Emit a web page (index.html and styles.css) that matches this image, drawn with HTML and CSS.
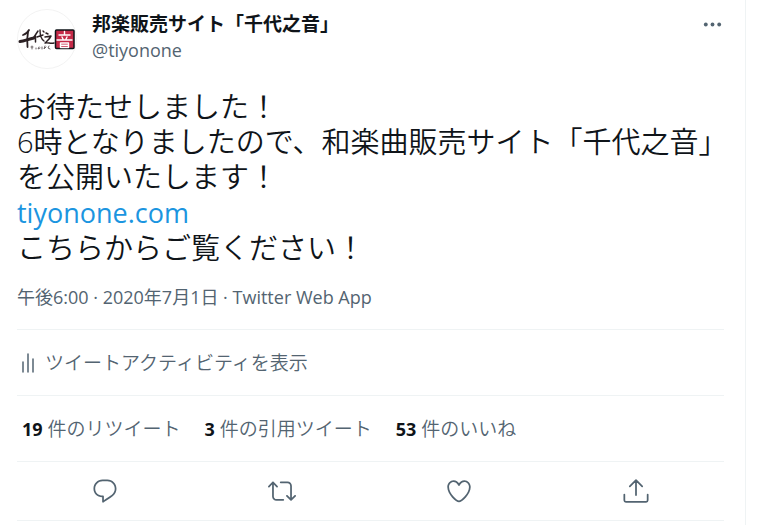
FILE: index.html
```html
<!DOCTYPE html>
<html lang="ja">
<head>
<meta charset="utf-8">
<meta name="viewport" content="width=device-width, initial-scale=1">
<title>邦楽販売サイト「千代之音」</title>
<link rel="stylesheet" href="styles.css">
</head>
<body>
<main class="column">
  <article class="tweet">
    <header class="head">
      <a class="avatar" href="#" aria-label="千代之音">
        <svg viewBox="0 0 60 60" aria-hidden="true">
          <circle cx="30" cy="30" r="29.5" fill="#fff" stroke="#f3f3f3" stroke-width="1"/>
          <g fill="none" stroke="#2b2023" stroke-linecap="round" stroke-linejoin="round">
            <path d="M12 21c-1 2-3 4-6 5" stroke-width="1.800"/>
            <path d="M3 32.500c5-.5 8-2.500 14-3.500" stroke-width="3"/>
            <path d="M11 23c-1 5-1 9-.5 15" stroke-width="1.800"/>
            <path d="M21 22l-4 6M18.500 27v6" stroke-width="1.500"/>
            <path d="M20 28l6-2M23 21c0 5 1 9 4 11M26 22l1 1" stroke-width="1.400"/>
            <path d="M29 24l2 1M28 28l6-1c-1 3-4 5-6 7 3-1 5 1 9 0" stroke-width="1.500"/>
            <path d="M15 37v3M14 38h2M19 39v1M22 38l-1 2 2-1M25 38v2M28 37l-1 3 2-2M32 37l-1 2 2 1" stroke-width="1" stroke="#6b6365"/>
          </g>
          <rect x="38.500" y="21" width="18.500" height="18.500" rx="1" fill="#c52a48"/>
          <path d="M47.500 22.500v3.500M42 26h11M45 28l1 2M50 28l-1 2M40 31h15M43.500 34h8v4.500h-8zM44 36.200h7" fill="none" stroke="#fff" stroke-width="1.400"/>
        </svg>
      </a>
      <div class="who">
        <a class="name" href="#">邦楽販売サイト「千代之音」</a>
        <a class="handle" href="#">@tiyonone</a>
      </div>
      <button class="more" type="button" aria-label="もっと見る">
        <svg viewBox="0 0 24 24" aria-hidden="true"><circle cx="5" cy="12" r="2"/><circle cx="12" cy="12" r="2"/><circle cx="19" cy="12" r="2"/></svg>
      </button>
    </header>
    <p class="text">お待たせしました！<br>6時となりましたので、和楽曲販売サイト「千代之音」<br>を公開いたします！<br><a href="#">tiyonone.com</a><br>こちらからご覧ください！</p>
    <p class="meta"><a href="#">午後6:00 · 2020年7月1日</a> · <a href="#">Twitter Web App</a></p>
    <a class="activity" href="#">
      <svg viewBox="0 0 22 22" aria-hidden="true"><path d="M6 10v10M11 2v18M16 7v13"/></svg>
      <span>ツイートアクティビティを表示</span>
    </a>
    <div class="stats">
      <a href="#"><strong>19</strong> 件のリツイート</a>
      <a href="#"><strong>3</strong> 件の引用ツイート</a>
      <a href="#"><strong>53</strong> 件のいいね</a>
    </div>
    <div class="actions">
      <button type="button" aria-label="返信"><svg viewBox="0 0 24 24" aria-hidden="true"><path class="solid" d="M14.046 2.242l-4.148-.01h-.002c-4.374 0-7.800 3.427-7.800 7.802 0 4.098 3.186 7.206 7.465 7.370v3.828c0 .108.044.286.120.403.142.225.384.347.632.347.138 0 .277-.038.402-.118.264-.168 6.473-4.140 8.088-5.506 1.902-1.610 3.040-3.970 3.043-6.312v-.017c-.006-4.367-3.430-7.787-7.800-7.788zm3.787 12.972c-1.134.960-4.862 3.405-6.772 4.643V16.670c0-.414-.335-.750-.750-.750h-.396c-3.660 0-6.318-2.476-6.318-5.886 0-3.534 2.768-6.302 6.300-6.302l4.147.010h.002c3.532 0 6.300 2.766 6.302 6.296-.003 1.910-.942 3.844-2.514 5.176z"/></svg></button>
      <button type="button" aria-label="リツイート"><svg viewBox="0 0 24 24" aria-hidden="true"><path class="solid" d="M23.770 15.670c-.292-.293-.767-.293-1.060 0l-2.220 2.220V7.650c0-2.068-1.683-3.750-3.750-3.750h-5.850c-.414 0-.750.336-.750.750s.336.750.750.750h5.850c1.240 0 2.250 1.010 2.250 2.250v10.240l-2.220-2.220c-.293-.293-.768-.293-1.060 0s-.294.768 0 1.060l3.500 3.500c.145.147.337.220.530.220s.383-.072.530-.220l3.500-3.500c.294-.292.294-.767 0-1.060zm-10.660 3.280H7.260c-1.240 0-2.250-1.010-2.250-2.250V6.460l2.220 2.220c.148.147.340.220.532.220s.384-.073.530-.220c.293-.293.293-.768 0-1.060l-3.500-3.500c-.293-.294-.768-.294-1.060 0l-3.500 3.500c-.294.292-.294.767 0 1.060s.767.293 1.060 0l2.220-2.220V16.700c0 2.068 1.683 3.750 3.750 3.750h5.850c.414 0 .750-.336.750-.750s-.337-.750-.750-.750z"/></svg></button>
      <button type="button" aria-label="いいね"><svg viewBox="0 0 24 24" aria-hidden="true"><path class="solid" d="M12 21.638h-.014C9.403 21.590 1.950 14.856 1.950 8.478c0-3.064 2.525-5.754 5.403-5.754 2.290 0 3.830 1.580 4.646 2.730.814-1.148 2.354-2.730 4.645-2.730 2.880 0 5.404 2.690 5.404 5.755 0 6.376-7.454 13.110-10.037 13.157H12zM7.354 4.225c-2.080 0-3.903 1.988-3.903 4.255 0 5.740 7.034 11.596 8.550 11.658 1.518-.062 8.550-5.917 8.550-11.658 0-2.267-1.823-4.255-3.903-4.255-2.528 0-3.940 2.936-3.952 2.965-.230.562-1.156.562-1.387 0-.014-.030-1.425-2.965-3.954-2.965z"/></svg></button>
      <button type="button" aria-label="共有"><svg viewBox="0 0 24 24" aria-hidden="true"><path d="M12 15.500V2.800M6.700 8L12 2.700 17.300 8M2 15v5q0 1.300 1.300 1.300h17.400q1.300 0 1.300-1.300V15"/></svg></button>
    </div>
  </article>
</main>
</body>
</html>
```
FILE: styles.css
```css
* {
  box-sizing: border-box;
}

body {
  margin: 0;
  background: #fff;
  color: #0f1419;
  font-family: "Open Sans", "Noto Sans CJK JP", sans-serif;
  font-size: 19px;
  line-height: 26px;
}

a {
  color: inherit;
  text-decoration: none;
}

button {
  display: flex;
  padding: 0;
  border: 0;
  background: none;
  color: #536471;
  cursor: pointer;
}

svg {
  display: block;
  fill: none;
  stroke: currentColor;
  stroke-width: 1.5;
  stroke-linecap: round;
  stroke-linejoin: round;
}

.solid {
  fill: currentColor;
  stroke: none;
}

.column {
  min-height: 100vh;
  margin-right: 13px;
  padding: 9px 21px 0 17px;
  border-right: 1px solid #eff3f4;
}

.head {
  display: flex;
  gap: 15px;
  align-items: flex-start;
}

.avatar svg {
  width: 60px;
  height: 60px;
}

.who {
  display: flex;
  flex: 1;
  flex-direction: column;
  padding-top: 2px;
}

.name {
  font-weight: 700;
}

.handle {
  color: #536471;
  font-size: 18px;
}

.more {
  padding: 4px 0;
}

.more svg {
  width: 23px;
  height: 23px;
  fill: currentColor;
  stroke: none;
}

.text {
  margin: 20px 0 0;
  font-family: "Open Sans", "Noto Sans CJK JP", sans-serif;
  font-size: 29px;
  font-weight: 350;
  line-height: 35px;
  white-space: nowrap;
}

.text a {
  color: #1b95e0;
  font-size: 27px;
  font-weight: 400;
}

.meta {
  margin: 19px 0 0;
  padding-bottom: 19px;
  border-bottom: 1px solid #eff3f4;
  color: #536471;
  font-size: 18px;
}

.activity {
  display: flex;
  gap: 6px;
  align-items: center;
  padding: 20px 0 19px;
  border-bottom: 1px solid #eff3f4;
  color: #536471;
  font-weight: 350;
}

.activity svg {
  width: 22px;
  height: 22px;
}

.stats {
  display: flex;
  gap: 24px;
  padding: 20px 5px 19px;
  border-bottom: 1px solid #eff3f4;
  color: #536471;
  font-weight: 350;
}

.stats strong {
  color: #0f1419;
  font-size: 18px;
  font-weight: 700;
}

.actions {
  display: grid;
  grid-template-columns: repeat(4, 1fr);
  justify-items: center;
  padding: 15px 0;
  border-bottom: 1px solid #eff3f4;
}

.actions svg {
  width: 28px;
  height: 28px;
}
```
